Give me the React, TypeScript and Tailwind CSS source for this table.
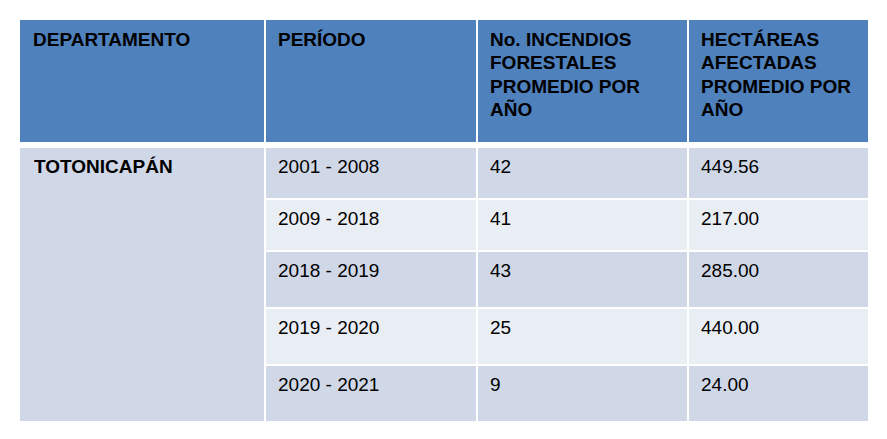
import React from "react";

const rows = [
  { p: "2001 - 2008", n: "42", h: "449.56", dark: true },
  { p: "2009 - 2018", n: "41", h: "217.00", dark: false },
  { p: "2018 - 2019", n: "43", h: "285.00", dark: true },
  { p: "2019 - 2020", n: "25", h: "440.00", dark: false },
  { p: "2020 - 2021", n: "9", h: "24.00", dark: true },
];

export default function App() {
  const font = { fontFamily: '"Liberation Sans", Arial, sans-serif' };
  return (
    <div className="w-[887px] h-[439px] bg-white pl-[20px] pt-[20px] text-black" style={font}>
      <div className="grid w-[848px] grid-cols-[244px_210px_209px_179px] gap-x-[2px] h-[122px] mb-[6px] text-[19px] leading-[23.3px] font-bold whitespace-nowrap">
        <div className="bg-[#4f81bd] pl-[13px] pt-[8px]">DEPARTAMENTO</div>
        <div className="bg-[#4f81bd] pl-[12px] pt-[8px]">PERÍODO</div>
        <div className="bg-[#4f81bd] pl-[12px] pt-[8px]">
          No. INCENDIOS
          <br />
          FORESTALES
          <br />
          PROMEDIO POR
          <br />
          AÑO
        </div>
        <div className="bg-[#4f81bd] pl-[12px] pt-[8px]">
          HECTÁREAS
          <br />
          AFECTADAS
          <br />
          PROMEDIO POR
          <br />
          AÑO
        </div>
      </div>
      <div className="grid w-[848px] grid-cols-[244px_210px_209px_179px] grid-rows-[50px_50px_55px_55px_55px] gap-[2px] text-[19px] leading-[23.3px] whitespace-nowrap">
        <div className="row-span-5 bg-[#d0d8e8] pl-[14px] pt-[7px] font-bold">TOTONICAPÁN</div>
        {rows.map((r) => {
          const bg = r.dark ? "bg-[#d0d8e8]" : "bg-[#e9edf4]";
          return (
            <React.Fragment key={r.p}>
              <div className={`${bg} pl-[12px] pt-[7px]`}>{r.p}</div>
              <div className={`${bg} pl-[12px] pt-[7px]`}>{r.n}</div>
              <div className={`${bg} pl-[12px] pt-[7px]`}>{r.h}</div>
            </React.Fragment>
          );
        })}
      </div>
    </div>
  );
}
